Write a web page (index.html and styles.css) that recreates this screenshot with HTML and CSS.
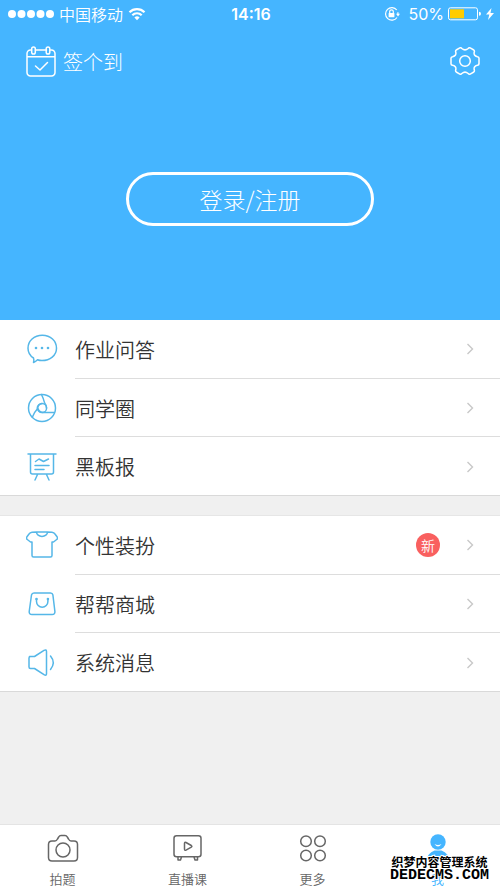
FILE: index.html
```html
<!DOCTYPE html>
<html lang="zh-CN">
<head>
<meta charset="utf-8">
<meta name="viewport" content="width=device-width, initial-scale=1">
<title>我</title>
<link rel="stylesheet" href="styles.css">
</head>
<body>
<div class="app">
  <header class="hero">
    <div class="status">
      <div class="status-side">
        <svg class="signal" width="46" height="10" viewBox="0 0 46 10" fill="#fff"><circle cx="4" cy="5" r="4"/><circle cx="13.500" cy="5" r="4"/><circle cx="23" cy="5" r="4"/><circle cx="32.500" cy="5" r="4"/><circle cx="42" cy="5" r="4"/></svg>
        <span class="carrier">中国移动</span>
        <svg width="18" height="14" viewBox="0 0 18 14" fill="none" stroke="#fff" stroke-width="2.200"><path d="M1.500 5.200a10.500 10.500 0 0 1 15 0M4.300 8.200a6.600 6.600 0 0 1 9.400 0"/><path d="M6.400 10.500a3.700 3.700 0 0 1 5.200 0L9 13.200z" fill="#fff" stroke="none"/></svg>
      </div>
      <time class="time">14:16</time>
      <div class="status-side status-right">
        <svg width="16" height="16" viewBox="0 0 16 16" fill="none" stroke="#fff" stroke-width="1.200"><path d="M12.800 4A6.300 6.300 0 1 0 13 11.500M13.900 6.300v2.500"/><path d="M12 7.800h4l-2 2.600z" fill="#fff" stroke="none"/><path d="M5.700 7V5.600a1.800 1.800 0 0 1 3.600 0V7"/><rect x="4.600" y="7" width="5.800" height="4.200" rx=".5" fill="#fff" stroke="none"/></svg>
        <span class="percent">50%</span>
        <svg width="34" height="14" viewBox="0 0 34 14"><rect x=".5" y=".8" width="29" height="12" rx="2" fill="none" stroke="#fff"/><rect x="2" y="2.300" width="14" height="9" fill="#fc0"/><path d="M31 4.800a2 2 0 0 1 0 4z" fill="#fff"/></svg>
        <svg width="8" height="12" viewBox="0 0 8 12" fill="#fff"><path d="M5.500 0L0 6.600h3.300L2 12l6-7H4.500z"/></svg>
      </div>
    </div>
    <div class="tools">
      <button class="tool" type="button">
        <svg width="30" height="32" viewBox="0 0 30 32" fill="none" stroke="#fff" stroke-width="1.500" stroke-linecap="round" stroke-linejoin="round"><path d="M5.500 4H4.500A3.500 3.500 0 0 0 1 7.500v19A3.500 3.500 0 0 0 4.500 30h21a3.500 3.500 0 0 0 3.500-3.500v-19A3.500 3.500 0 0 0 25.500 4h-1M9.500 4h11M1 10.800h28M9.500 20l4.500 4 7.500-7.500"/><rect x="5.700" y="1" width="3.600" height="7" rx="1.800"/><rect x="20.200" y="1" width="3.600" height="7" rx="1.800"/></svg>
        <span>签个到</span>
      </button>
      <button class="tool" type="button" aria-label="设置">
        <svg width="30" height="30" viewBox="0 0 30 30" fill="none" stroke="#fff" stroke-width="1.500" stroke-linejoin="round"><circle cx="15" cy="14" r="5.300"/><path d="M9.800 .9Q11 .4 11.800 1.500Q15 4.200 18.200 1.500Q19 .4 20.200 .9L23.800 3Q24.700 3.700 24.300 4.900Q23.200 8.700 27.400 9.700Q28.900 9.900 29 11.100V16.900Q28.900 18.100 27.400 18.300Q23.200 19.300 24.300 23.100Q24.700 24.300 23.800 25L20.200 27.100Q19 27.600 18.200 26.500Q15 23.800 11.800 26.500Q11 27.600 9.800 27.100L6.200 25Q5.300 24.300 5.700 23.100Q6.800 19.300 2.600 18.300Q1.100 18.100 1 16.900V11.100Q1.100 9.900 2.600 9.700Q6.800 8.700 5.700 4.900Q5.300 3.700 6.200 3Z"/></svg>
      </button>
    </div>
    <button class="login" type="button">登录/注册</button>
  </header>

  <main class="content">
    <nav class="group">
      <a class="row" href="#qa">
        <svg class="icon" viewBox="0 0 32 32"><path d="M7.500 25A12.700 12 0 0 1 2 15.200C2 8 8 2.200 16.300 2.200S30.500 8 30.500 15.200 24 27.500 16 27.500q-2.500 0-4.500-.8-1.500 1.500-4 2.800.8-2.300 0-4.500z"/><g class="dots"><circle cx="10" cy="15" r="1.300"/><circle cx="16" cy="15" r="1.300"/><circle cx="22" cy="15" r="1.300"/></g></svg>
        <span class="label">作业问答</span>
        <svg class="chevron" viewBox="0 0 8 12"><path d="M1.500 1l5 5-5 5"/></svg>
      </a>
      <a class="row" href="#circle">
        <svg class="icon" viewBox="0 0 32 32"><circle cx="16" cy="16" r="13.500"/><circle cx="16" cy="16" r="4.600"/><path d="M15.500 2.500q2 4 3 8.200 2 2.500 2 5.300M11.500 15q1 5 5 5.600h11.800M16 11.400q-4 .6-4.700 5.600-3.300 3.500-5 8.200"/></svg>
        <span class="label">同学圈</span>
        <svg class="chevron" viewBox="0 0 8 12"><path d="M1.500 1l5 5-5 5"/></svg>
      </a>
      <a class="row" href="#board">
        <svg class="icon" viewBox="0 0 32 32"><path d="M2 3h28M4.500 3v18a2 2 0 0 0 2 2h19a2 2 0 0 0 2-2V3M9.500 10.500L13 8l4.500 2.500L22.500 8M9 14.500h14M9 18.500h9M11.500 23.500L9 29M20.500 23.500L23 29"/></svg>
        <span class="label">黑板报</span>
        <svg class="chevron" viewBox="0 0 8 12"><path d="M1.500 1l5 5-5 5"/></svg>
      </a>
    </nav>
    <nav class="group">
      <a class="row" href="#dress">
        <svg class="icon" viewBox="0 0 32 32"><path d="M10.500 3L6 3.300Q4 3.500 3 5L.8 8q-.8 1.500.5 2.500L4.500 13H6v13.500q0 1.500 1.500 1.500h17q1.500 0 1.500-1.500V13h1.500l3.200-2.500q1.300-1 .5-2.500L29 5q-1-1.500-3-1.700L21.500 3zM10.500 3a5.500 4.500 0 0 0 11 0"/></svg>
        <span class="label">个性装扮</span>
        <span class="badge">新</span>
        <svg class="chevron" viewBox="0 0 8 12"><path d="M1.500 1l5 5-5 5"/></svg>
      </a>
      <a class="row" href="#shop">
        <svg class="icon" viewBox="0 0 32 32"><path d="M8 5h16.500q2 0 2.400 2l2 16.500q.2 3-2.800 3H6q-3 0-2.800-3L5.500 7Q6 5 8 5zM10.500 11v2.500a5.700 5.700 0 0 0 11.400 0V11"/><g class="dots"><circle cx="10.500" cy="11" r="1.300"/><circle cx="21.900" cy="11" r="1.300"/></g></svg>
        <span class="label">帮帮商城</span>
        <svg class="chevron" viewBox="0 0 8 12"><path d="M1.500 1l5 5-5 5"/></svg>
      </a>
      <a class="row" href="#messages">
        <svg class="icon" viewBox="0 0 32 32"><path d="M3.500 9.500h5L18 3.400q2.500-1.300 2.500 1.100v22.200q0 2.400-2.500 1L8.500 21.500h-4q-1.500 0-1.500-1.500V11q0-1.500 1.500-1.500M24.500 9q5.500 6.500 0 13.500"/></svg>
        <span class="label">系统消息</span>
        <svg class="chevron" viewBox="0 0 8 12"><path d="M1.500 1l5 5-5 5"/></svg>
      </a>
    </nav>
  </main>

  <footer class="tabs">
    <a class="tab" href="#photo">
      <svg viewBox="0 0 32 30"><path d="M5 7h3q1.500 0 2.500-2l1.200-2Q12.500 1.500 14 1.500h4q1.500 0 2.300 1.500l1.200 2q1 2 2.500 2h3q3.500 0 3.500 3.500v13q0 3.500-3.500 3.500H5q-3.500 0-3.500-3.500v-13Q1.500 7 5 7z"/><circle cx="16" cy="16" r="7"/></svg>
      <span>拍题</span>
    </a>
    <a class="tab" href="#live">
      <svg viewBox="0 0 32 30"><path d="M4.500 1.800h22q2.500 0 2.500 2.500v16q0 2.500-2.500 2.500h-22Q2 22.800 2 20.300v-16q0-2.500 2.500-2.500zM6 23v3h2.500l1-3M22 23l1 3h2.500v-3M12.500 9.500q0-1.800 1.500-1l5.300 3q1.200.8 0 1.600l-5.300 3q-1.500.8-1.500-1z"/></svg>
      <span>直播课</span>
    </a>
    <a class="tab" href="#more">
      <svg viewBox="0 0 32 30"><circle cx="9" cy="7.300" r="5.300"/><circle cx="23" cy="7.300" r="5.300"/><circle cx="9" cy="21.500" r="5.300"/><circle cx="23" cy="21.500" r="5.300"/></svg>
      <span>更多</span>
    </a>
    <a class="tab active" href="#me" aria-current="page">
      <svg viewBox="0 0 32 30"><circle cx="16" cy="8" r="7.700"/><path d="M5 26.500q0-7 7.500-10h7q7.500 3 7.500 10z"/><path class="smile" d="M12.500 10q3.500 2 7 0-3.500 5-7 0z"/></svg>
      <span>我</span>
    </a>
    <div class="watermark"><span class="mark-name">织梦内容管理系统</span><span class="mark-site">DEDECMS.COM</span></div>
  </footer>
</div>
</body>
</html>
```
FILE: styles.css
```css
* { box-sizing: border-box; }

body {
  margin: 0;
  background: #f0f0f0;
  color: #333;
  font-family: "Noto Sans CJK SC", sans-serif;
}

button {
  padding: 0;
  border: 0;
  background: none;
  color: inherit;
  font: inherit;
}

a { color: inherit; text-decoration: none; }
svg { display: block; flex: none; }

.app {
  display: flex;
  flex-direction: column;
  min-height: 100vh;
}

.hero {
  display: flex;
  flex-direction: column;
  height: 320px;
  background: #45b5ff;
  color: #fff;
}

.status {
  display: flex;
  align-items: center;
  height: 28px;
  padding: 0 6px 0 8px;
  font-size: 16px;
  line-height: 28px;
}

.status-side {
  display: flex;
  flex: 1;
  align-items: center;
  gap: 5px;
}

.status-right { justify-content: flex-end; gap: 4px; }
.carrier { font-weight: 350; }
.time { font-family: Inter, sans-serif; font-weight: 600; }
.percent { margin-left: 4px; font-family: Inter, sans-serif; font-weight: 400; }

.tools {
  display: flex;
  align-items: center;
  justify-content: space-between;
  height: 68px;
  padding: 0 20px 0 26px;
}

.tool {
  display: flex;
  align-items: center;
  gap: 7px;
  font-size: 20px;
  font-weight: 300;
  line-height: 32px;
}

.login {
  width: 248px;
  height: 54px;
  margin: 76px auto 0;
  border: 3px solid #fff;
  border-radius: 27px;
  font-size: 23px;
  font-weight: 300;
  line-height: 48px;
}

.content {
  display: flex;
  flex: 1;
  flex-direction: column;
  gap: 20px;
}

.group {
  border-bottom: 1px solid #d9d9d9;
  background: #fff;
}

.group + .group { box-shadow: 0 -1px #e6e6e6; }

.row {
  display: flex;
  position: relative;
  align-items: center;
  height: 58px;
  padding: 0 26px;
  font-size: 20px;
  font-weight: 350;
}

.row:last-child { height: 59px; padding-top: 2px; }
.row + .row { padding-top: 2px; }

.row + .row::before {
  content: "";
  position: absolute;
  top: 0;
  right: 0;
  left: 75px;
  border-top: 1px solid #ddd;
}

.icon {
  width: 32px;
  height: 32px;
  margin-right: 17px;
  fill: none;
  stroke: #55b7e8;
  stroke-width: 1.5;
  stroke-linecap: round;
  stroke-linejoin: round;
}

.dots { fill: #55b7e8; stroke: none; }
.label { flex: 1; }

.badge {
  width: 24px;
  height: 24px;
  margin-right: 26px;
  border-radius: 50%;
  background: #f9605f;
  color: #fff;
  font-size: 14px;
  line-height: 24px;
  text-align: center;
}

.chevron {
  width: 8px;
  height: 12px;
  fill: none;
  stroke: #c8c8c8;
  stroke-width: 1.4;
}

.tabs {
  display: flex;
  position: relative;
  height: 65px;
  border-top: 1px solid #e4e4e4;
  background: #fff;
}

.tab {
  display: flex;
  flex: 1;
  flex-direction: column;
  align-items: center;
  padding-top: 9px;
  gap: 6px;
  color: #666;
  font-size: 13px;
  font-weight: 350;
  line-height: 18px;
}

.tab svg {
  width: 32px;
  height: 30px;
  fill: none;
  stroke: #666;
  stroke-width: 1.5;
  stroke-linejoin: round;
}

.tab.active { color: #45b5ff; }
.tab.active svg { fill: #45b5ff; stroke: none; }
.tab.active .smile { fill: #fff; }

.watermark {
  display: flex;
  position: absolute;
  right: 11px;
  bottom: 6px;
  flex-direction: column;
  align-items: center;
  color: #000;
  line-height: 14px;
  white-space: nowrap;
  paint-order: stroke fill;
  -webkit-text-stroke: 2px #fff;
}

.mark-name { font-size: 12px; font-weight: 700; }
.mark-site { font-family: "Liberation Mono", monospace; font-size: 15px; font-weight: 700; }
```
